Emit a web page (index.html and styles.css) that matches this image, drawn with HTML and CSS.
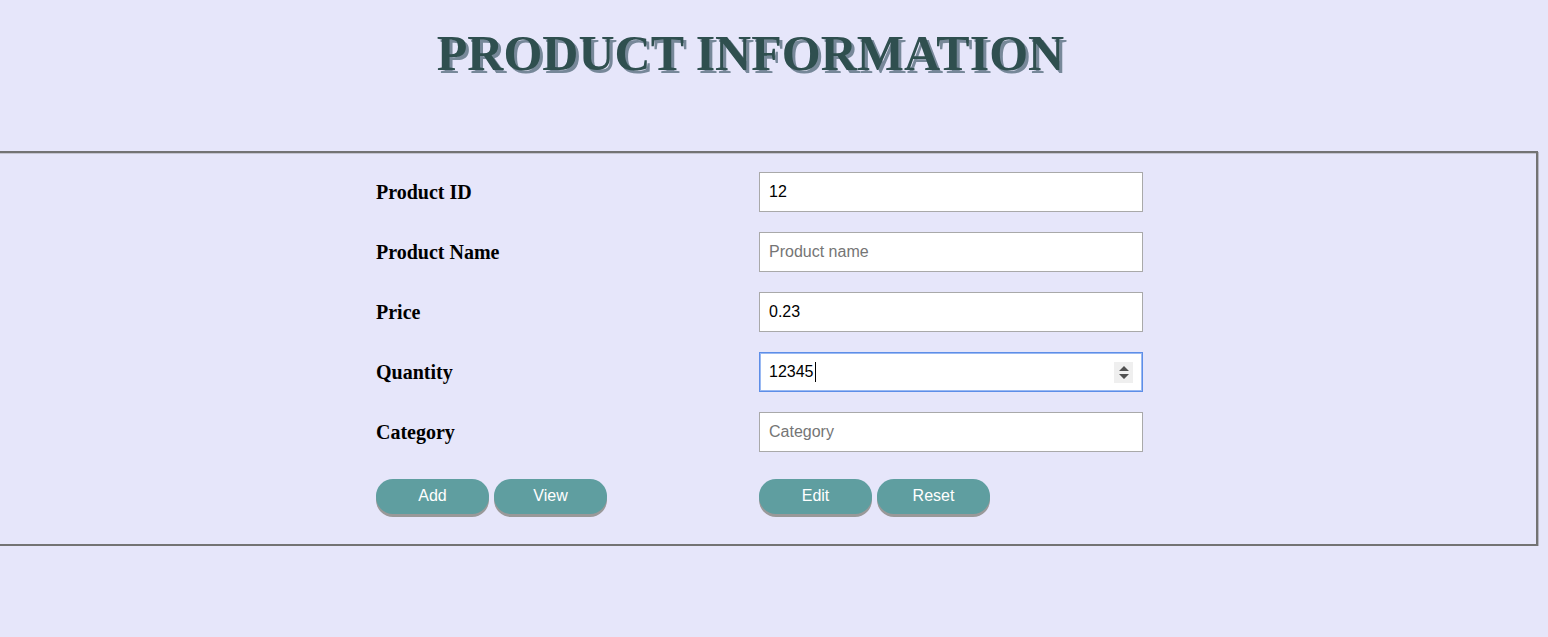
FILE: index.html
```html
<!DOCTYPE html>
<html>
<head>
<meta charset="utf-8">
<title>Product Information</title>
<link rel="stylesheet" href="styles.css">
</head>
<body>
<div class="page">
  <h1 class="title">PRODUCT INFORMATION</h1>
  <form class="panel">
    <div class="grid">
      <label class="lbl">Product ID</label>
      <input class="field" type="text" value="12">
      <label class="lbl">Product Name</label>
      <input class="field" type="text" placeholder="Product name">
      <label class="lbl">Price</label>
      <input class="field" type="text" value="0.23">
      <label class="lbl">Quantity</label>
      <div class="field-wrap">
        <input class="field focused" type="text" value="12345">
        <span class="caret"></span>
        <span class="spinner">
          <svg width="10" height="14" viewBox="0 0 10 14"><path d="M5 0 L10 5 L0 5 Z M0 8 L10 8 L5 13 Z" fill="#505050"/></svg>
        </span>
      </div>
      <label class="lbl">Category</label>
      <input class="field" type="text" placeholder="Category">
      <div class="btns">
        <button type="button" class="btn">Add</button>
        <button type="button" class="btn">View</button>
      </div>
      <div class="btns">
        <button type="button" class="btn">Edit</button>
        <button type="button" class="btn">Reset</button>
      </div>
    </div>
  </form>
</div>
</body>
</html>
```
FILE: styles.css
```css
html, body {
  margin: 0;
  padding: 0;
  background: #e6e6fa;
}
body {
  overflow: hidden;
}
.page {
  margin: 0 10px 0 -37px;
}
.title {
  margin: 28px 0 0 0;
  height: 50px;
  line-height: 50px;
  text-align: center;
  font-family: "Liberation Serif", "Times New Roman", serif;
  font-weight: bold;
  font-size: 50px;
  color: #2f4f4f;
  text-shadow: 3px 3px 0 #778899;
}
.panel {
  margin-top: 73px;
  border: 2px solid #737373;
  box-shadow: 1px 1px 0 #b8b8c4, inset 0 1px 0 #c4c4d0;
  padding: 19px 0 0 411px;
  box-sizing: border-box;
  height: 395px;
}
.grid {
  display: grid;
  grid-template-columns: 383px 384px;
  row-gap: 20px;
  align-items: center;
}
.lbl {
  font-family: "Liberation Serif", "Times New Roman", serif;
  font-weight: bold;
  font-size: 20px;
  color: #000;
}
.field {
  box-sizing: border-box;
  width: 384px;
  height: 40px;
  margin: 0;
  border: 1px solid #a9a9a9;
  background: #fff;
  padding: 0 9px;
  font-family: "Liberation Sans", Arial, sans-serif;
  font-size: 16px;
  color: #000;
  outline: none;
  display: block;
}
.field::placeholder {
  color: #757575;
}
.field-wrap {
  position: relative;
  width: 384px;
  height: 40px;
}
.field.focused {
  border: 1px solid #5d8ee8;
  box-shadow: inset 0 0 0 1px #9ab9f2;
}
.caret {
  position: absolute;
  left: 56px;
  top: 10px;
  width: 1px;
  height: 20px;
  background: #000;
}
.spinner {
  position: absolute;
  left: 355px;
  top: 10px;
  width: 19px;
  height: 21px;
  background: #efefef;
  display: flex;
  align-items: center;
  justify-content: center;
}
.spinner svg {
  display: block;
}
.btns {
  display: flex;
  gap: 5px;
  margin-top: 7px;
  padding-bottom: 3px;
}
.btn {
  width: 113px;
  height: 35px;
  border: none;
  border-radius: 17px;
  background: #5f9ea0;
  color: #fff;
  font-family: "Liberation Sans", Arial, sans-serif;
  font-size: 16px;
  line-height: 33px;
  padding: 0 0 2px 0;
  box-shadow: 0 3px 0 #999;
  cursor: pointer;
}
```
